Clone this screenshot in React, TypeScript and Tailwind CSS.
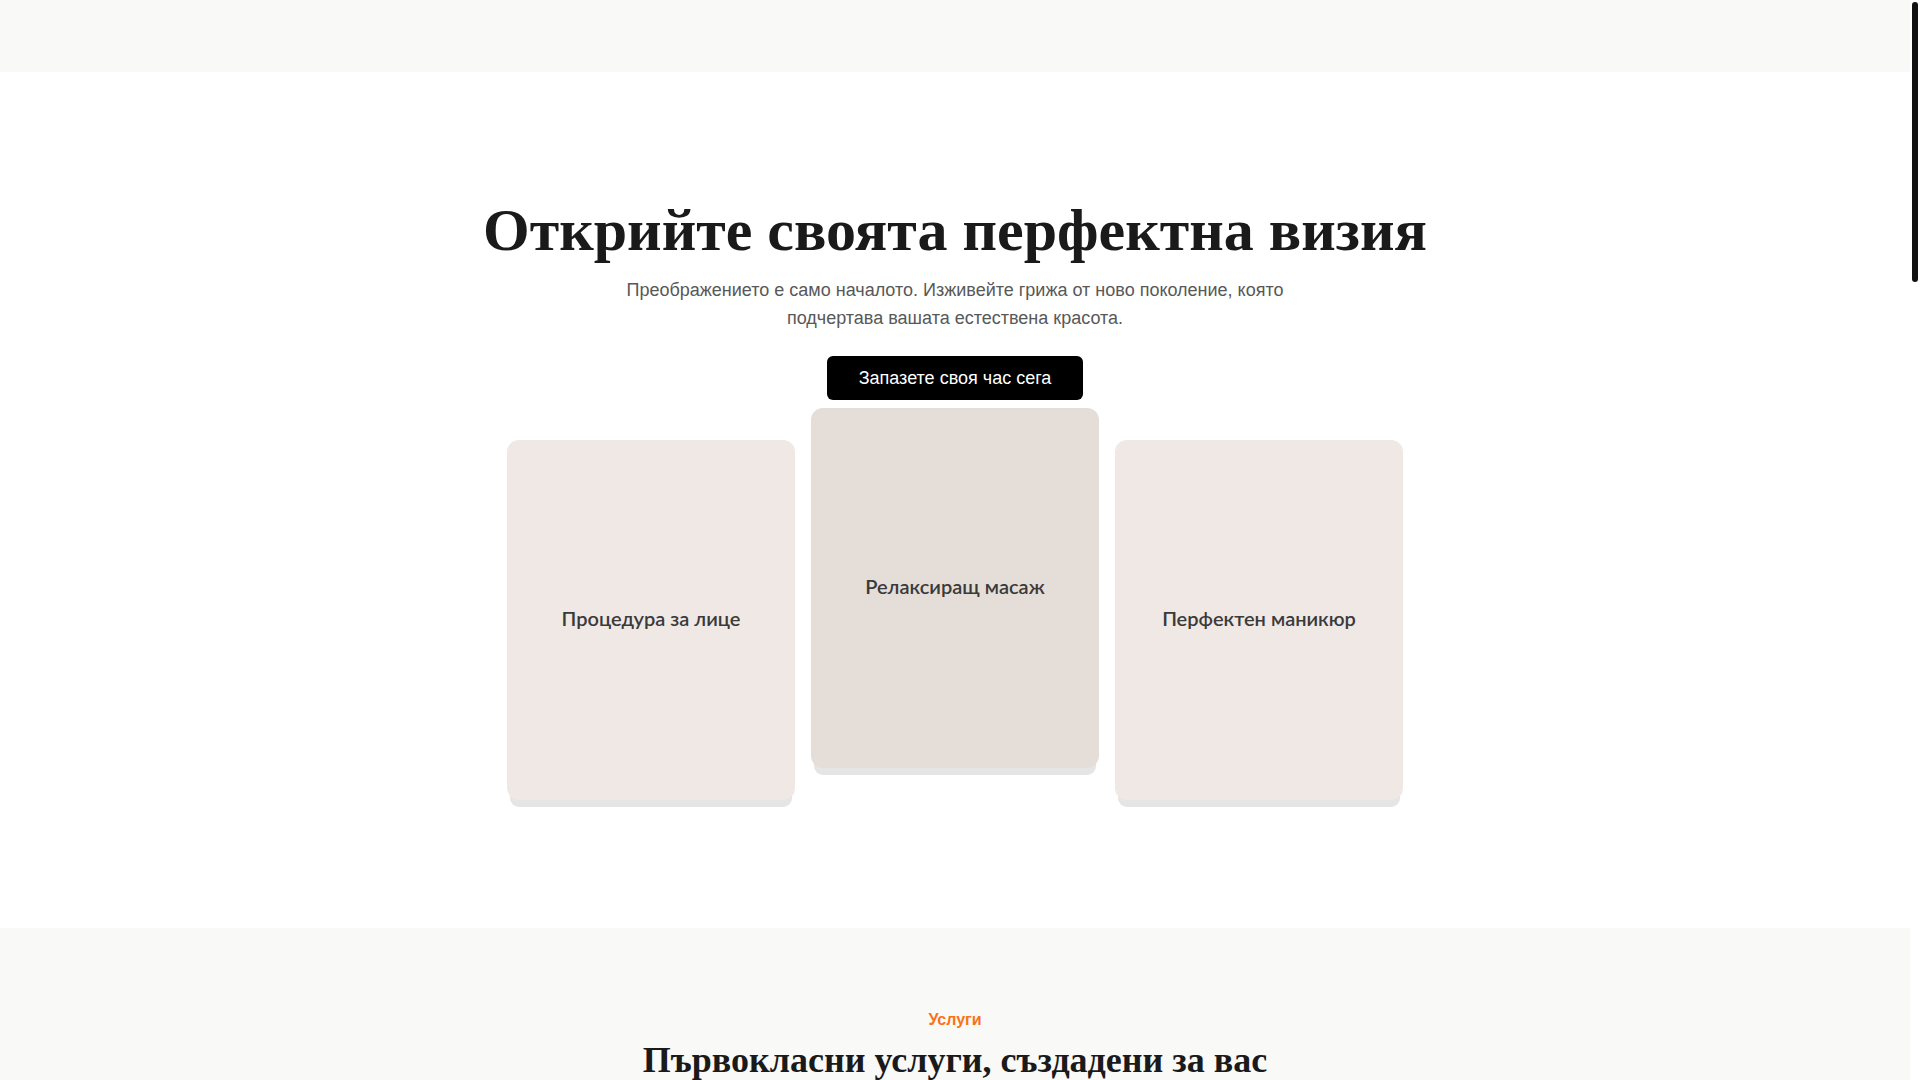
const services = [
  { title: 'Процедура за лице', tone: 'bg-[#f0e8e4]', lift: '' },
  { title: 'Релаксиращ масаж', tone: 'bg-[#e5ddd8]', lift: '-translate-y-8' },
  { title: 'Перфектен маникюр', tone: 'bg-[#f0e8e4]', lift: '' },
];

export default function App() {
  return (
    <div className="flex h-screen bg-white font-['Liberation_Sans',Arial,sans-serif]">
      <div className="flex-1 overflow-y-auto [scrollbar-width:none]">
        {/* Top bar */}
        <header className="h-18 bg-[#f9f9f7]" />

        {/* Hero */}
        <section className="px-6 py-32 text-center">
          <h1 className="mb-4 font-['Liberation_Serif',serif] text-6xl leading-none font-bold text-[#1a1a1a]">
            Открийте своята перфектна визия
          </h1>
          <p className="mx-auto max-w-2xl text-lg leading-7 text-[#585858]">
            Преображението е само началото. Изживейте грижа от ново поколение, която
            подчертава вашата естествена красота.
          </p>
          <button className="mt-6 rounded-md bg-black px-8 py-2 text-lg leading-7 text-white">
            Запазете своя час сега
          </button>

          <div className="mx-auto mt-10 grid max-w-4xl grid-cols-3 items-start gap-4">
            {services.map((s) => (
              <div
                key={s.title}
                className={`flex aspect-[4/5] items-center justify-center rounded-xl pb-1 shadow-[0_10px_0_-3px_#e5e5e5] ${s.tone} ${s.lift}`}
              >
                <h3 className="font-['Lato',sans-serif] text-xl font-semibold text-[#3a3a3a]">
                  {s.title}
                </h3>
              </div>
            ))}
          </div>
        </section>

        {/* Services */}
        <section className="min-h-[3180px] bg-[#f9f9f7] px-6 pt-20 text-center">
          <p className="mb-2 text-base leading-6 font-bold text-[#f97316]">Услуги</p>
          <h2 className="font-['Liberation_Serif',serif] text-4xl font-bold text-[#1a1a1a]">
            Първокласни услуги, създадени за вас
          </h2>
        </section>
      </div>

      {/* Scrollbar */}
      <div className="w-[10px] shrink-0 bg-white pt-0.5">
        <div className="mx-auto h-[280px] w-1.5 rounded-full bg-[#111]" />
      </div>
    </div>
  );
}
